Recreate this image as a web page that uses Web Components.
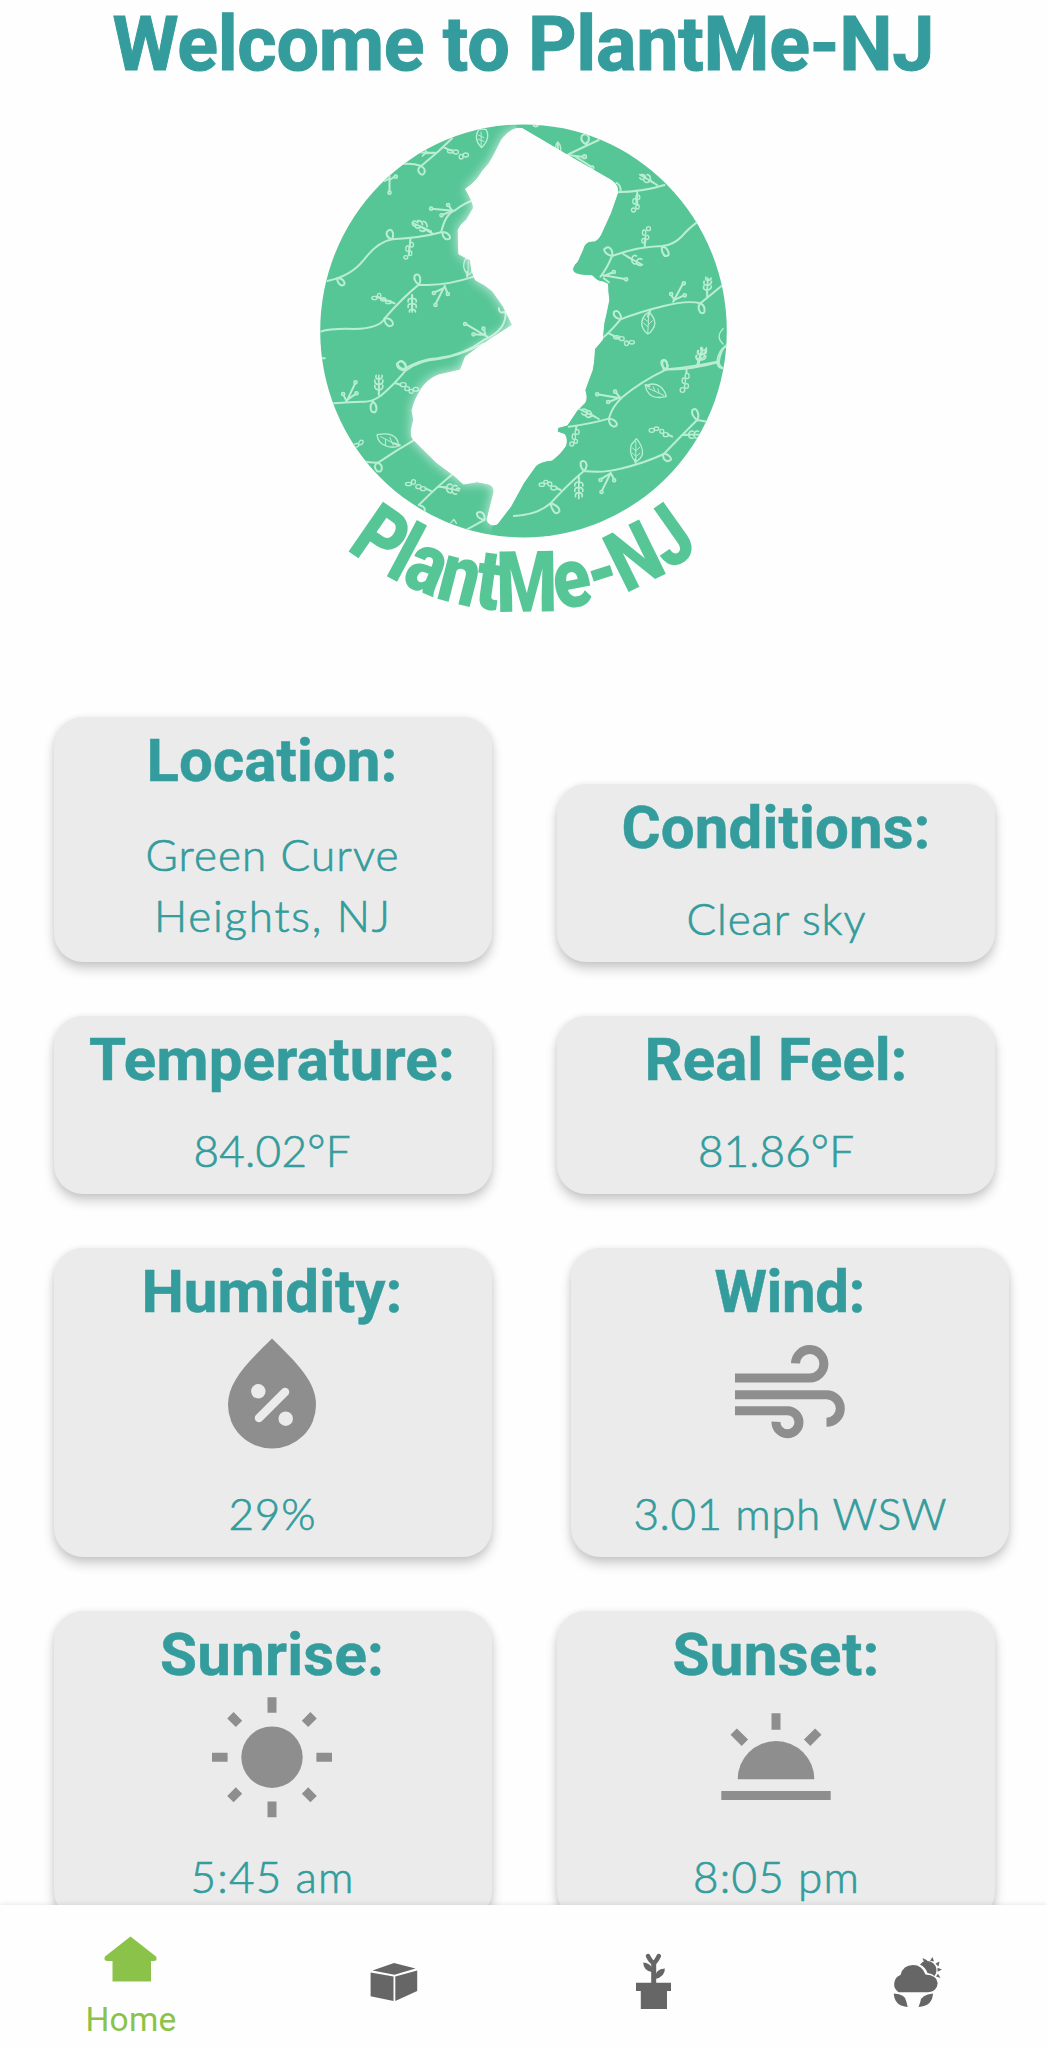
<!DOCTYPE html>
<html lang="en">
<head>
<meta charset="utf-8">
<title>PlantMe-NJ</title>
<style>
html,body{margin:0;height:100%;background:#fefefe}
body{font-family:Roboto,"Liberation Sans",sans-serif}
</style>
</head>
<body>
<plant-app></plant-app>
<script>
/* Spreads a line's letters so that it takes a given advance width. */
class FitText extends HTMLElement{
  connectedCallback(){
    this.attachShadow({mode:'open'}).innerHTML=`<style>:host{display:inline-block;white-space:nowrap}</style><span>${this.getAttribute('text')}</span>`;
    const s=this.shadowRoot.querySelector('span'),n=this.getAttribute('text').length;
    const d=(parseFloat(this.getAttribute('width'))-s.getBoundingClientRect().width)/(n-1);
    s.style.letterSpacing=d+'px';s.style.marginRight=-d+'px';
  }
}
customElements.define('fit-text',FitText);

const ICONS={
humidity:`<path fill="currentColor" d="M66 10.500C40 36 22 54 22 77a44 43.500 0 0 0 88 0C110 54 92 36 66 10.500z"/><g fill="#ebebeb"><circle cx="52.300" cy="63.300" r="7.200"/><circle cx="79.700" cy="90.700" r="7.200"/></g><path d="M53 90L79 64" stroke="#ebebeb" stroke-width="8.500" stroke-linecap="round"/>`,
wind:`<g fill="none" stroke="currentColor" stroke-width="9"><path d="M11 50H85.500A14.200 14.200 0 1 0 71.500 35.300"/><path d="M11 66.700H102.500a13.800 13.800 0 0 1 0 27.600"/><path d="M11 82.700H63.500A11.500 11.500 0 1 1 52 93.700"/></g>`,
sun:`<circle cx="66" cy="66.200" r="30.700" fill="currentColor"/><g stroke="currentColor" stroke-width="9"><path d="M66 6.200v15.600M66 110.600v15.600M6 66.200h15.600M110.400 66.200H126M99 32.900l8.600-8.600M33 32.900l-8.600-8.600M99 99.500l8.600 8.600M33 99.500l-8.600 8.600"/></g>`,
sunset:`<path fill="currentColor" d="M27.700 88.200a38.300 38.100 0 0 1 76.600 0z"/><g stroke="currentColor" stroke-width="9"><path d="M66 22.200v16.600M97.100 51.800l11.200-11.200M34.900 51.800l-11.200-11.200"/><path d="M11.300 104.500H120.700" stroke-width="9"/></g>`
};
class WeatherIcon extends HTMLElement{
  connectedCallback(){
    this.attachShadow({mode:'open'}).innerHTML=`<style>:host{display:block;width:132px;height:132px;color:#8e8e8e}svg{display:block}</style><svg width="132" height="132" viewBox="0 0 132 132">${ICONS[this.getAttribute('name')]}</svg>`;
  }
}
customElements.define('weather-icon',WeatherIcon);

class WeatherCard extends HTMLElement{
  connectedCallback(){
    this.attachShadow({mode:'open'}).innerHTML=`<style>
    :host{box-sizing:border-box;display:flex;flex-direction:column;align-items:center;flex:none;width:438px;height:var(--h,178px);padding-top:9px;border-radius:29px;background:#ebebeb;color:#349c9c;box-shadow:0 7px 12px rgba(0,0,0,.19),0 1px 7px rgba(0,0,0,.08)}
    :host(:first-child){padding-right:2px}
    h2{margin:0;font:700 60px/70px Roboto,sans-serif;height:70px;-webkit-text-stroke:.5px currentColor}
    .icon{display:flex;height:132px;margin:1.500px 0 0}
    .value{display:flex;flex-direction:column;align-items:center;font:300 44px/61px Lato,sans-serif;-webkit-text-stroke:.7px currentColor;margin-top:var(--gap,25px)}
    </style><h2><fit-text text="${this.getAttribute('heading')}" width="${this.getAttribute('heading-width')}"></fit-text></h2>
    ${this.hasAttribute('icon')?`<div class="icon"><weather-icon name="${this.getAttribute('icon')}"></weather-icon></div>`:''}
    <div class="value"><slot></slot></div>`;
  }
}
customElements.define('weather-card',WeatherCard);

/* Round emblem: the state's outline over a field of vines, name set on an arc below. */
const NJ='M516.700 128.300L521.700 128.500L566.700 155L611 180.500Q618 185 617 193L610 213L600 235Q596 242 592 241Q584 241 582 250L576.700 261.700Q570 268 573 272Q577 276 591.700 275.700Q597 282 601.700 281.700L607 284Q607 291 608.300 300Q606 312 603.300 323.300L601.700 340L594 349L593 362L591.700 370L584.300 390Q587 399 584 403L576 411L566.700 425L557.300 427.500L556.700 432L564 434.500Q567 439 565 446Q560 454 551.700 460Q540 461 535 466L523 483L510 506.700L496.700 524Q489 527 486.500 520L493.500 492Q494 486 488 484L476.700 481.700L463 484L453 475L436.700 463L423.300 450L412 438.500Q409 434 413.300 420L411.500 410Q414 400 420 390Q427 379 438 375L460 370L465 356.700L477 348L490 339L512 325L503 306.700L492 291Q484 284 475 280Q470 270 470 260L458.300 254L457.700 230Q460 224 466 220L473 208Q473 202 465 189Q476 182 482 171Q490 163 494 154L501 140Q507 131 516.700 128.300Z';
const VINES=`
<g transform="translate(310 110) scale(.3333)">
<path d="M425 85Q380 130 332 168Q308 160 280 162M332 168q-14 8-6 20q10 12 16 0q4-12-10-20"/>
<path d="M237 195V245M237 205l-14 8M237 210l18-12M400 112l22 10M345 130l30-2"/>
<path d="M50 513Q120 500 160 450Q200 396 245 388Q330 384 392 367Q405 310 435 300Q460 280 490 270"/>
<path d="M245 388q-20-6-16-22q12-14 18 2q2 12-2 20M397 367q-4 10 8 20q18 4 12-10q-8-12-20-10M80 505q0 16 14 22q14-4 4-16q-8-8-18-6"/>
<path d="M430 302L362 296M425 302l-12-17M425 302l-32 14M365 370l-35-20M300 385l-5 50"/>
<path d="M30 665Q60 655 130 657Q210 655 225 622Q280 560 325 524Q400 530 490 500"/>
<path d="M325 524q-18-14-12-28q12-8 16 8q2 12-4 20M222 625q0 18 14 24q18-2 8-16q-8-10-22-8"/>
<path d="M403 527L375 583M398 535l-30 14M403 530l9 22M252 580l-55-20M305 555v45M470 485v15"/>
<path d="M275 780Q330 748 380 745Q460 735 520 690Q590 660 585 605M285 778q-22-2-24-18q12-14 22 0q6 10 2 18M530 680L465 642M525 675l-5-18M525 675l-35-2M585 605q-20 8-20-10"/>
<g stroke-width="4" fill="#8fdfba"><circle cx="362" cy="296" r="5"/><circle cx="413" cy="285" r="5"/><circle cx="393" cy="316" r="5"/><circle cx="375" cy="585" r="5"/><circle cx="370" cy="549" r="5"/><circle cx="412" cy="552" r="5"/><circle cx="464" cy="642" r="5"/><circle cx="519" cy="656" r="5"/><circle cx="489" cy="673" r="5"/><circle cx="237" cy="248" r="5"/><circle cx="256" cy="200" r="5"/>
<path d="M513 113q-26-28-8-54q12-4 22 0q14 28-14 54M473 495q-22-22-8-48q22-6 24 20q0 18-16 28" fill="none"/><path d="M512 110V66M504 75l16 8M503 88l18 6M473 490v-36" stroke-width="3"/></g>
<g class="sprig"><path d="M362 364L305 338M350 350q-2-16-12-16M336 344q-2-14-14-12M322 338q-6-6-14-4M346 360q-12 8-18 0M330 352q-12 6-16-2M316 346q-8 4-10-4M305 555V606M305 566q-14-2-12 10M305 566q14-2 12 10M305 582q-14-2-12 10M305 582q14-2 12 10M305 598q-10 0-8 8M305 598q10 0 10 8M368 128l-38 0M352 128l-8-6M344 130l-8 8"/></g>
<g class="pods"><ellipse cx="303" cy="404" rx="6" ry="7"/><ellipse cx="291" cy="416" rx="5" ry="8"/><ellipse cx="299" cy="430" rx="5" ry="7"/><ellipse cx="286" cy="442" rx="6" ry="5"/><ellipse cx="234" cy="576" rx="9" ry="5"/><ellipse cx="218" cy="568" rx="8" ry="5"/><ellipse cx="206" cy="556" rx="5" ry="6"/><ellipse cx="192" cy="564" rx="8" ry="5"/><ellipse cx="420" cy="124" rx="9" ry="5"/><ellipse cx="436" cy="126" rx="8" ry="6"/><ellipse cx="452" cy="140" rx="6" ry="7"/><ellipse cx="466" cy="135" rx="8" ry="6"/></g>
</g>
<g transform="translate(520 110) scale(.3333)">
<path d="M235 90Q170 120 140 135M195 102q-18-10-10-26q14-8 20 6q2 14-10 20M140 135l45 5M165 140l50 32M112 128V98M38 45q6 8 14 2"/>
<path d="M287 247Q370 245 432 225M300 245q2-18-12-26M410 225l-25-15M350 245v40"/>
<path d="M528 338Q500 360 485 378Q460 405 425 408Q350 410 275 438Q260 475 240 500M275 438q-24-6-24-20q14-14 22 2q4 10 2 18M425 410q-4 16 8 28q16 2 10-14q-6-14-18-14"/>
<path d="M373 410v-25M308 432l30 18M245 495l72 13M250 498l30-12M250 505l15 12"/>
<path d="M603 528Q570 555 540 580Q500 570 430 588Q360 605 300 628Q270 665 245 685M300 628q-24-6-20-22q12-8 18 6q6 8 2 16M540 580q-12 12 0 28q14 6 12-10q0-12-12-18"/>
<path d="M458 575l30-55M462 570l-10-15M465 568l26-12M390 600l-8 20M560 560v-18M265 670l30 15"/>
<path d="M430 780Q420 750 432 750Q445 760 438 780M438 778Q520 770 590 755Q595 720 618 708M590 755q0 15 15 20M530 765l10-20"/>
<g stroke-width="4" fill="#8fdfba"><circle cx="490" cy="520" r="5"/><circle cx="452" cy="552" r="5"/><circle cx="493" cy="556" r="5"/><circle cx="317" cy="508" r="5"/><circle cx="280" cy="486" r="5"/><circle cx="215" cy="173" r="5"/><circle cx="192" cy="140" r="6"/>
<path d="M382 672q-32-26-8-58l12-8q28 30 10 52q-4 10-14 14zM608 702q-24-22 0-46M112 128q-14-16 0-32q14 14 6 32" fill="none"/><path d="M382 668l3-54M370 640l12 10M396 632l-12 12M370 626l13 8" stroke-width="3"/></g>
<g class="sprig"><path d="M400 218L358 194M390 210q0-16-10-16M376 204q-2-12-14-10M388 214q-12 8-18-2M372 206q-10 6-14-2M320 440L366 464M334 446q4-14 14-8M348 454q6-12 16-6M334 450q0 12 12 12M348 458q2 10 14 8M560 548L562 504M560 540q-14 0-10-12M560 540q14-2 12-12M561 526q-14 0-10-12M561 526q12-2 12-12M562 512q-8-2-6-10M562 512q10-2 10-8M532 760L544 718M536 748q-12-2-8-12M538 744q14 2 14-8M540 734q-12-2-8-12M542 730q14 2 14-10"/></g>
<g class="pods"><ellipse cx="352" cy="262" rx="6" ry="7"/><ellipse cx="342" cy="274" rx="5" ry="8"/><ellipse cx="351" cy="290" rx="5" ry="7"/><ellipse cx="339" cy="300" rx="6" ry="6"/><ellipse cx="370" cy="392" rx="6" ry="7"/><ellipse cx="380" cy="382" rx="5" ry="6"/><ellipse cx="371" cy="368" rx="5" ry="8"/><ellipse cx="384" cy="356" rx="6" ry="6"/><ellipse cx="288" cy="682" rx="9" ry="5"/><ellipse cx="304" cy="686" rx="7" ry="6"/><ellipse cx="318" cy="700" rx="6" ry="7"/><ellipse cx="334" cy="697" rx="8" ry="5"/></g>
</g>
<g transform="translate(310 340) scale(.3333)">
<path d="M70 190Q120 185 155 185Q180 188 210 168Q250 135 285 92Q330 60 380 58Q440 50 520 10M285 92q-26-4-26-20q12-16 22-2q8 10 4 22M188 185q-14 14-4 30q14 6 14-10q0-12-10-20"/>
<path d="M108 185L135 128M108 183l-10-20M112 178l26-18M205 165v-25M255 130l15 4M35 55l8 0"/>
<path d="M165 365Q185 368 203 368Q260 330 312 300M200 368q-14 12 0 26q14 4 14-10q0-12-14-16M268 316l-18-6M430 400Q380 440 325 495M325 495q20 4 18 18M365 455l-20-10M385 440l20 2M470 568L522 540M522 540q-26-6-22-22q14-6 20 6q4 8 2 16"/>
<g stroke-width="4" fill="#8fdfba"><circle cx="135" cy="127" r="5"/><circle cx="98" cy="162" r="5"/><circle cx="138" cy="160" r="5"/>
<path d="M265 318Q240 328 215 312Q200 300 200 284Q240 276 256 294Q264 304 265 318M128 315q12-8 16-2q4-18 14-10q0 12-12 12q-4 10-18 4M420 550l10-12 8 12" fill="none"/><path d="M262 316L210 290M225 298v16M238 292l10 24" stroke-width="3"/></g>
<g class="sprig"><path d="M205 160V106M205 150q-14-2-12-14M205 150q14-2 12-14M205 134q-14-2-12-14M205 134q14-2 12-14M205 118q-12-2-8-12M205 118q12-2 10-12M398 442L446 452M408 444q4-16 16-10M424 446q4-14 16-8M408 446q2 14 14 12M424 450q2 14 14 12M436 450q4-8 12-4"/></g>
<g class="pods"><ellipse cx="278" cy="134" rx="9" ry="6"/><ellipse cx="290" cy="146" rx="7" ry="6"/><ellipse cx="302" cy="154" rx="6" ry="6"/><ellipse cx="316" cy="148" rx="8" ry="6"/><ellipse cx="338" cy="446" rx="8" ry="6"/><ellipse cx="324" cy="440" rx="8" ry="6"/><ellipse cx="309" cy="426" rx="6" ry="7"/><ellipse cx="294" cy="432" rx="9" ry="5"/></g>
</g>
<g transform="translate(520 340) scale(.3333)">
<path d="M-20 528Q50 525 90 490Q140 435 190 393Q250 400 300 386Q370 370 430 342Q475 295 530 240L560 245M530 240q-20-16-14-30q12-8 16 8q4 12-2 22M428 342q-2 16 12 22q18-2 8-14q-8-10-20-8M190 393q-14-16-8-28q12-6 16 8q2 10-8 20M90 490q4 22 16 30q16-2 8-16q-8-10-24-14"/>
<path d="M145 260Q210 252 265 236Q275 200 305 172Q360 125 438 88Q510 90 595 66Q600 30 618 15M438 88q-20-10-14-26q14-6 16 10q4 8-2 16M265 236q0 20 16 24q14-4 4-16q-8-8-20-8M595 66q0 14 16 20"/>
<path d="M300 175L230 163M298 172l-14-18M290 176l-25 10M235 237l-25-15M168 258l-2 12M375 135l12 4M498 90v10M530 78l6-18M270 400L243 455M270 400l-30 18M270 398l12 22M175 410v20M120 450l-12-6M455 290l-12-6M485 285h20M345 368v-10"/>
<g stroke-width="4" fill="#8fdfba"><circle cx="230" cy="163" r="5"/><circle cx="284" cy="155" r="5"/><circle cx="263" cy="186" r="5"/><circle cx="243" cy="456" r="5"/><circle cx="240" cy="420" r="5"/><circle cx="281" cy="421" r="5"/>
<path d="M345 365Q325 345 332 315L348 296Q368 320 366 342Q360 360 345 365M375 138Q400 125 420 140Q436 155 437 170Q400 178 385 160Q376 150 375 138" fill="none"/><path d="M346 360V304M336 324l10 8M336 340l10 8M358 322l-12 10M358 340l-12 10M382 144L430 166M398 140l6 14M412 146l4 14" stroke-width="3"/></g>
<g class="sprig"><path d="M225 232L178 208M214 226q-2-16-14-14M200 218q-2-14-14-10M214 228q-12 8-18 0M200 222q-10 8-16-2M534 76L546 24M538 62q-14-2-10-14M540 60q16 0 16-12M542 46q-14-2-8-14M544 44q14 0 14-12M546 32q-8-2-4-10M546 32q10 0 12-8M175 416V476M175 426q-14 0-12 12M175 426q14 0 12 12M175 442q-14 0-12 12M175 442q14 0 12 12M175 458q-12 0-10 12M175 458q12 0 10 12M490 284H540M504 284q4-14 14-10M504 284q2 14 14 10M520 284q4-14 14-10M520 284q2 14 14 10"/></g>
<g class="pods"><ellipse cx="170" cy="276" rx="6" ry="7"/><ellipse cx="160" cy="290" rx="5" ry="8"/><ellipse cx="166" cy="304" rx="5" ry="6"/><ellipse cx="154" cy="312" rx="6" ry="6"/><ellipse cx="100" cy="444" rx="9" ry="6"/><ellipse cx="88" cy="432" rx="6" ry="6"/><ellipse cx="76" cy="426" rx="6" ry="5"/><ellipse cx="64" cy="434" rx="8" ry="5"/><ellipse cx="500" cy="108" rx="6" ry="8"/><ellipse cx="490" cy="122" rx="5" ry="8"/><ellipse cx="498" cy="138" rx="6" ry="7"/><ellipse cx="486" cy="150" rx="7" ry="7"/><ellipse cx="436" cy="284" rx="8" ry="6"/><ellipse cx="424" cy="274" rx="6" ry="6"/><ellipse cx="408" cy="266" rx="7" ry="5"/><ellipse cx="394" cy="271" rx="8" ry="6"/></g>
</g>`;
class PlantLogo extends HTMLElement{
  connectedCallback(){
    this.attachShadow({mode:'open'}).innerHTML=`<style>:host{display:block;width:440px;height:510px;margin-right:1px}svg{display:block;overflow:visible}
    text{font:900 85px Roboto,sans-serif;fill:#57c697}
    .sprig{stroke-width:5}.pods{stroke-width:4}</style>
    <svg width="440" height="510" viewBox="303.500 116 440 510">
    <defs><clipPath id="disc"><ellipse cx="523" cy="330.900" rx="203.300" ry="206.500"/></clipPath>
    <clipPath id="west"><path d="M300 100H516V330L490 540H300Z"/></clipPath>
    <filter id="soft" x="-20%" y="-20%" width="140%" height="140%"><feGaussianBlur stdDeviation="6"/></filter>
    <path id="arc" d="M245.400 368.300A280 280 0 0 0 800.600 368.300"/></defs>
    <ellipse cx="523" cy="330.900" rx="203.300" ry="206.500" fill="#57c697"/>
    <g clip-path="url(#disc)">
      <g fill="none" stroke="#baeed3" stroke-width="6" stroke-linecap="round" stroke-linejoin="round">${VINES}</g>
      <g clip-path="url(#west)"><path d="${NJ}" fill="#fefefe" opacity=".8" filter="url(#soft)"/></g>
      <path d="${NJ}" fill="#fefefe" stroke="#fefefe" stroke-width="1" stroke-linejoin="round"/>
    </g>
    <text text-anchor="middle" textLength="384" lengthAdjust="spacingAndGlyphs"><textPath href="#arc" startOffset="50%" textLength="384" lengthAdjust="spacingAndGlyphs">PlantMe-NJ</textPath></text>
    </svg>`;
  }
}
customElements.define('plant-logo',PlantLogo);

const TABS={
home:`<path d="M27.500 5.500L53 25.500Q55 30 50.500 30H48V50.500H9.500V30H5Q0 30 2 25.500Z"/>`,
box:`<path d="M5.600 14.500L28.500 18.600V43L5.600 38.300ZM30.300 18.600L52.200 12.500V33L30.300 43ZM7.500 12.500L29 4.900L50.500 10.600L29.500 16.800Z"/>`,
pot:`<path d="M9 24.700H44V33H40V51H13.800V33H9Z"/><path d="M26.700 26V3" stroke="currentColor" stroke-width="5"/><path d="M21 -2Q24 4 26.500 5Q29 4 31.800 -2" fill="none" stroke="currentColor" stroke-width="4.500" stroke-linecap="round"/><path d="M25 14Q16.500 13 16.200 4.500Q23 5 25 10ZM28 20Q28 11 37.900 10.500Q38 19 28 21Z"/>`,
weather:`<path d="M9.500 34.300A9.800 9.800 0 0 1 11.500 17Q14 7 24 7Q33 7 36.500 16.500Q48 17 48.700 25Q48 33.500 39 34.300Z"/><path d="M31 6.500A8.500 8.500 0 1 1 45.500 18Q43 15.500 38.500 15Q36.500 9 31 6.500Z"/><path d="M33.500 0l5 2.500-3.500 2zM43.500 -1l1.500 4.500-4-.8zM50.500 3.500l-1 5-3-3zM53 11.500l-4.500 2.300v-4zM51.500 20l-4.500-1.500 2-2.800z"/><path d="M4.700 35.500Q17 36 17.500 44L18.700 49Q5.500 48 4.700 35.500ZM44 35.500Q32 36.500 31.300 44L29.500 49Q43.500 48 44 35.500Z"/>`
};
class TabItem extends HTMLElement{
  connectedCallback(){
    const on=this.hasAttribute('label');
    this.attachShadow({mode:'open'}).innerHTML=`<style>
    :host{display:flex;flex:1;flex-direction:column;align-items:center;color:${on?'#8bc34a':'#666'};padding-top:${on?26.500:53}px;box-sizing:border-box}
    svg{display:block;overflow:visible}
    .label{font:400 33.500px/40px Roboto,sans-serif;margin-top:14px}
    </style><svg width="55" height="55" viewBox="0 0 55 55" fill="currentColor">${TABS[this.getAttribute('icon')]}</svg>${on?`<div class="label"><fit-text text="${this.getAttribute('label')}" width="91"></fit-text></div>`:''}`;
  }
}
customElements.define('tab-item',TabItem);

class TabBar extends HTMLElement{
  connectedCallback(){
    this.attachShadow({mode:'open'}).innerHTML=`<style>:host{display:flex;flex:none;height:143.500px;background:#fefefe;position:relative;box-shadow:0 -1px 5px rgba(0,0,0,.09)}</style><slot></slot>`;
  }
}
customElements.define('tab-bar',TabBar);

class PlantApp extends HTMLElement{
  connectedCallback(){
    this.attachShadow({mode:'open'}).innerHTML=`<style>
    :host{display:flex;flex-direction:column;width:1047px;height:2048px;overflow:hidden;background:#fefefe}
    main{flex:1;min-height:0;overflow:hidden;display:flex;flex-direction:column;align-items:center}
    h1{margin:0;flex:none;font:700 75.500px/88px Roboto,sans-serif;color:#349c9c;height:88px;-webkit-text-stroke:1px currentColor}
    plant-logo{flex:none;margin:28px 0 91px}
    .rows{width:100%;display:flex;flex-direction:column;gap:54px;flex:none}
    .row{display:flex;align-items:flex-end;gap:65px;padding-left:54px}
    .wide{gap:79px}
    .tall{--h:309px;--gap:22.500px}
    .two{--h:244.500px;--gap:28px}
    </style>
    <main><h1><fit-text text="Welcome to PlantMe-NJ" width="822"></fit-text></h1><plant-logo></plant-logo>
    <div class="rows">
    <div class="row"><weather-card class="two" heading="Location:" heading-width="251"><fit-text text="Green Curve" width="253"></fit-text><fit-text text="Heights, NJ" width="236"></fit-text></weather-card><weather-card heading="Conditions:" heading-width="309"><fit-text text="Clear sky" width="179"></fit-text></weather-card></div>
    <div class="row"><weather-card heading="Temperature:" heading-width="366"><fit-text text="84.02°F" width="157"></fit-text></weather-card><weather-card heading="Real Feel:" heading-width="263"><fit-text text="81.86°F" width="156"></fit-text></weather-card></div>
    <div class="row wide"><weather-card class="tall" icon="humidity" heading="Humidity:" heading-width="261"><fit-text text="29%" width="87"></fit-text></weather-card><weather-card class="tall" icon="wind" heading="Wind:" heading-width="151"><fit-text text="3.01 mph WSW" width="313"></fit-text></weather-card></div>
    <div class="row"><weather-card class="tall" icon="sun" heading="Sunrise:" heading-width="224"><fit-text text="5:45 am" width="163"></fit-text></weather-card><weather-card class="tall" icon="sunset" heading="Sunset:" heading-width="207"><fit-text text="8:05 pm" width="166"></fit-text></weather-card></div>
    </div></main>
    <tab-bar><tab-item icon="home" label="Home"></tab-item><tab-item icon="box"></tab-item><tab-item icon="pot"></tab-item><tab-item icon="weather"></tab-item></tab-bar>`;
  }
}
customElements.define('plant-app',PlantApp);
</script>
</body>
</html>
